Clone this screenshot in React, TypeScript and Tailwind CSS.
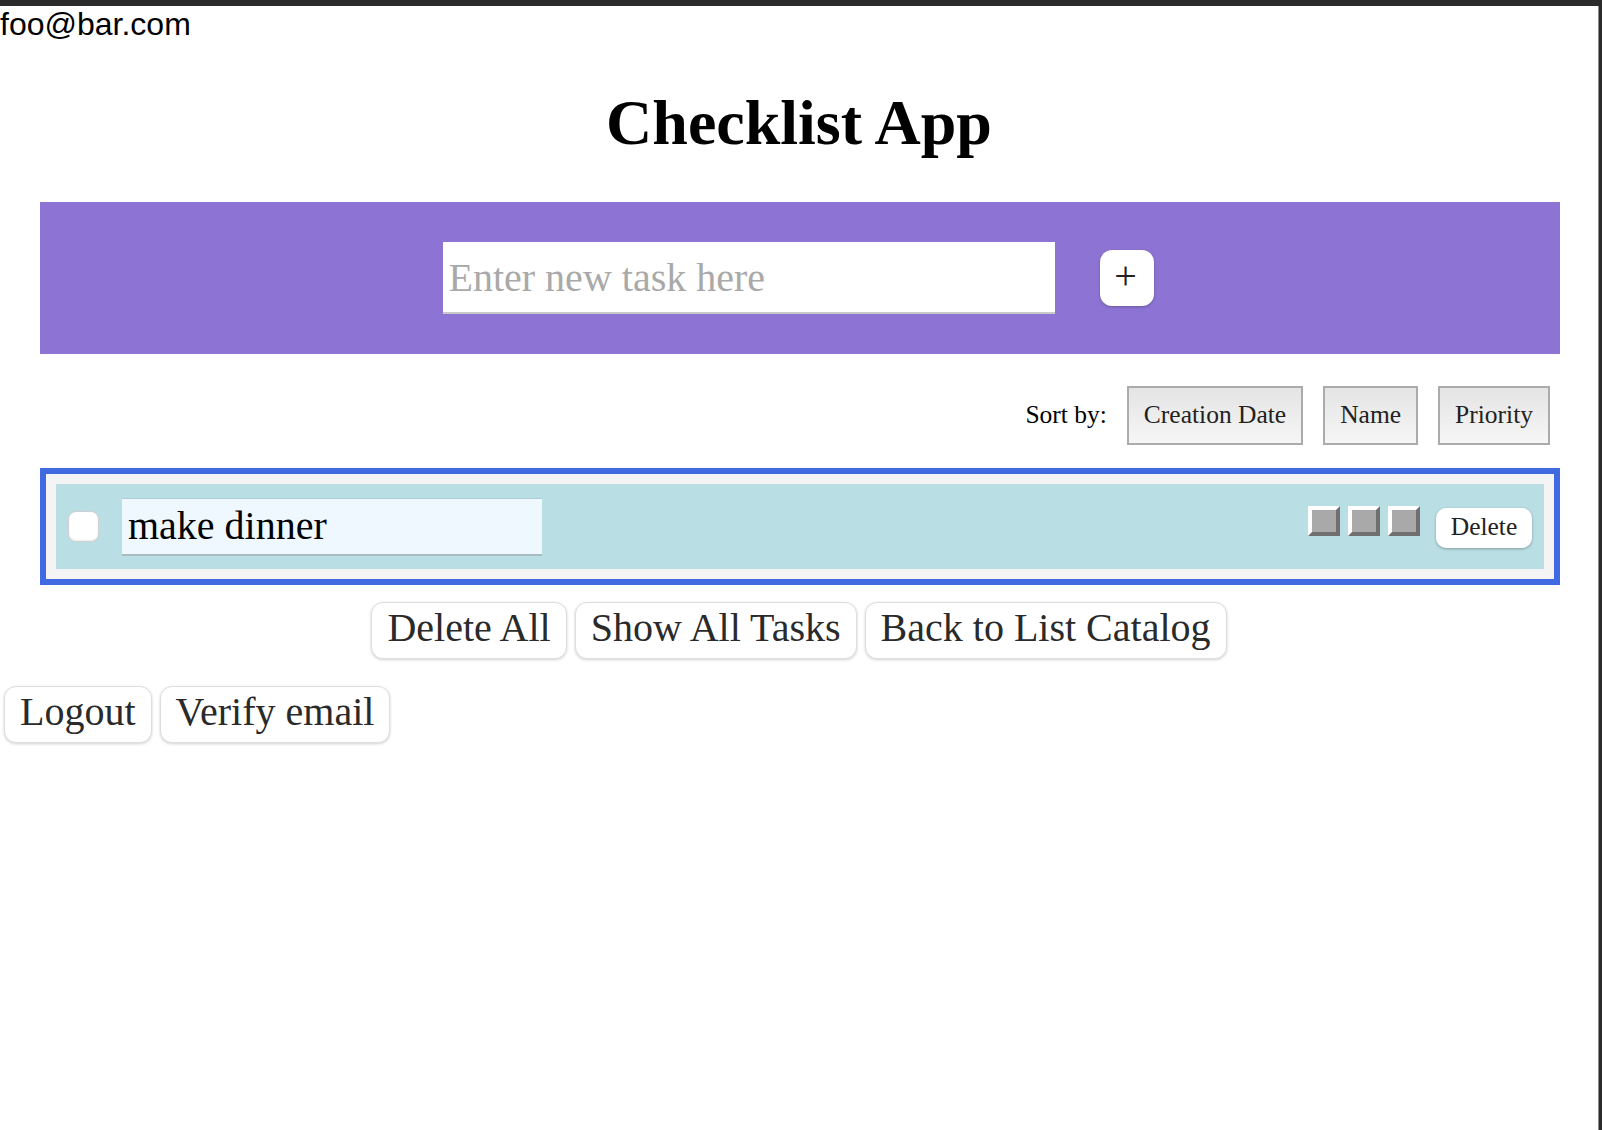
import { useState } from 'react';

function SortButton({ label }: { label: string }) {
  return (
    <button className="h-[59px] px-[15px] border-2 border-[#ababab] bg-gradient-to-b from-[#e4e4e4] to-[#f6f6f6] text-[25.5px] text-[#222]">
      {label}
    </button>
  );
}

function PrioritySquare() {
  return (
    <button className="w-[32px] h-[30px] bg-[#a9a9a9] border-[4px] border-t-[#ffffff] border-l-[#ffffff] border-b-[#6f6f6f] border-r-[#6f6f6f]"></button>
  );
}

function BigButton({ label }: { label: string }) {
  return (
    <button className="h-[57px] px-[15px] pb-[5px] bg-white border border-[#dedede] rounded-[12px] shadow-[0_1px_3px_rgba(0,0,0,0.18)] text-[40px] leading-none text-[#2a2a2a]">
      {label}
    </button>
  );
}

export default function App() {
  const [newTask, setNewTask] = useState('');
  const [taskName, setTaskName] = useState('make dinner');
  const [done, setDone] = useState(false);

  return (
    <div className="min-h-screen bg-white border-t-[6px] border-[#2b2b2b] flex">
      <div className="flex-1 font-['Liberation_Serif',serif] text-black">
        <div className="font-['Liberation_Sans',Arial,sans-serif] text-[32px] leading-[37px]">foo@bar.com</div>
        <h1 className="text-center text-[64px] leading-[74px] font-bold mt-[43px] mb-[42px]">Checklist App</h1>

        <div className="w-[1520px] ml-[40px]">
          <div className="bg-[#8d74d4] h-[152px] flex items-center justify-center gap-[45px] pr-[4px]">
            <input
              type="text"
              value={newTask}
              onChange={e => setNewTask(e.target.value)}
              placeholder="Enter new task here"
              className="w-[612px] h-[72px] bg-white px-[6px] text-[40px] placeholder:text-[#a9a9a9] border-b-2 border-[#c9c9c9] outline-none"
            />
            <button className="w-[54px] h-[56px] bg-white rounded-[12px] shadow-[0_1px_3px_rgba(0,0,0,0.25)] text-[40px] leading-none text-[#222] pb-[4px] pr-[2px]">
              +
            </button>
          </div>

          <div className="mt-[32px] flex justify-end items-center gap-[20px] pr-[10px]">
            <span className="text-[25.5px]">Sort by:</span>
            <SortButton label="Creation Date" />
            <SortButton label="Name" />
            <SortButton label="Priority" />
          </div>

          <div className="mt-[23px] border-[6px] border-[#4169e1] bg-[#f4f4f4] p-[10px]">
            <div className="h-[85px] bg-[#b9dee4] flex items-center px-[12px]">
              <input
                type="checkbox"
                checked={done}
                onChange={e => setDone(e.target.checked)}
                className="appearance-none w-[31px] h-[31px] rounded-[8px] bg-white border border-[#d0d0d0] shadow-[inset_0_-1px_2px_rgba(0,0,0,0.08)]"
              />
              <input
                type="text"
                value={taskName}
                onChange={e => setTaskName(e.target.value)}
                className="ml-[23px] w-[420px] h-[58px] bg-[#f0f8ff] pl-[6px] text-[40px] border-t border-t-[#a9d0d6] border-b-2 border-b-[#a9bcc4] outline-none"
              />
              <div className="ml-auto flex items-center gap-[8px] mb-[11px]">
                <PrioritySquare />
                <PrioritySquare />
                <PrioritySquare />
              </div>
              <button className="ml-[16px] w-[96px] h-[40px] bg-white rounded-[10px] shadow-[0_1px_3px_rgba(0,0,0,0.3)] text-[25.5px] leading-none text-[#222] mt-[3px] pb-[2px]">
                Delete
              </button>
            </div>
          </div>
        </div>

        <div className="mt-[17px] flex justify-center gap-[8px]">
          <BigButton label="Delete All" />
          <BigButton label="Show All Tasks" />
          <BigButton label="Back to List Catalog" />
        </div>

        <div className="mt-[27px] flex gap-[8px] pl-[4px]">
          <BigButton label="Logout" />
          <BigButton label="Verify email" />
        </div>
      </div>
      <div className="w-[1px] bg-[#8a8a8a]"></div>
      <div className="w-[3px] bg-[#2b2b2b]"></div>
    </div>
  );
}
